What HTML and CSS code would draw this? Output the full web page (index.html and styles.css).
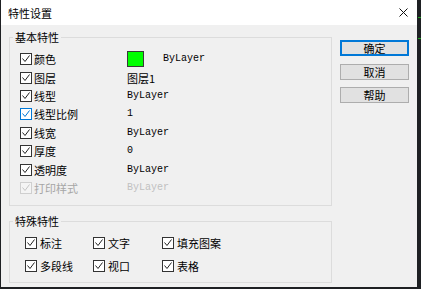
FILE: index.html
```html
<!DOCTYPE html>
<html lang="zh-CN">
<head>
<meta charset="utf-8">
<title>特性设置</title>
<link rel="stylesheet" href="styles.css">
</head>
<body>
<div class="window">
  <div class="titlebar">
    <span class="title">特性设置</span>
    <svg class="close" viewBox="0 0 9 9" width="9" height="9"><path d="M0.5 0.5 L8.5 8.5 M8.5 0.5 L0.5 8.5"/></svg>
  </div>
  <div class="content">
    <div class="groups">
      <div class="group basic">
        <div class="group-title">基本特性</div>
        <div class="rows">
          <div class="row">
            <svg class="cb" viewBox="0 0 12 12"><rect x="0.5" y="0.5" width="11" height="11"/><path d="M2.5 5.5 L5 8.5 L9.5 2.5"/></svg>
            <span class="label">颜色</span>
            <span class="value"><span class="swatch"></span><span class="mono after-swatch">ByLayer</span></span>
          </div>
          <div class="row">
            <svg class="cb" viewBox="0 0 12 12"><rect x="0.5" y="0.5" width="11" height="11"/><path d="M2.5 5.5 L5 8.5 L9.5 2.5"/></svg>
            <span class="label">图层</span>
            <span class="value">图层1</span>
          </div>
          <div class="row">
            <svg class="cb" viewBox="0 0 12 12"><rect x="0.5" y="0.5" width="11" height="11"/><path d="M2.5 5.5 L5 8.5 L9.5 2.5"/></svg>
            <span class="label">线型</span>
            <span class="value mono">ByLayer</span>
          </div>
          <div class="row">
            <svg class="cb hot" viewBox="0 0 12 12"><rect x="0.5" y="0.5" width="11" height="11"/><path d="M2.5 5.5 L5 8.5 L9.5 2.5"/></svg>
            <span class="label">线型比例</span>
            <span class="value mono">1</span>
          </div>
          <div class="row">
            <svg class="cb" viewBox="0 0 12 12"><rect x="0.5" y="0.5" width="11" height="11"/><path d="M2.5 5.5 L5 8.5 L9.5 2.5"/></svg>
            <span class="label">线宽</span>
            <span class="value mono">ByLayer</span>
          </div>
          <div class="row">
            <svg class="cb" viewBox="0 0 12 12"><rect x="0.5" y="0.5" width="11" height="11"/><path d="M2.5 5.5 L5 8.5 L9.5 2.5"/></svg>
            <span class="label">厚度</span>
            <span class="value mono">0</span>
          </div>
          <div class="row">
            <svg class="cb" viewBox="0 0 12 12"><rect x="0.5" y="0.5" width="11" height="11"/><path d="M2.5 5.5 L5 8.5 L9.5 2.5"/></svg>
            <span class="label">透明度</span>
            <span class="value mono">ByLayer</span>
          </div>
          <div class="row disabled">
            <svg class="cb off" viewBox="0 0 12 12"><rect x="0.5" y="0.5" width="11" height="11"/><path d="M2.5 5.5 L5 8.5 L9.5 2.5"/></svg>
            <span class="label">打印样式</span>
            <span class="value mono">ByLayer</span>
          </div>
        </div>
      </div>
      <div class="group special">
        <div class="group-title">特殊特性</div>
        <div class="grid">
          <div class="item"><svg class="cb" viewBox="0 0 12 12"><rect x="0.5" y="0.5" width="11" height="11"/><path d="M2.5 5.5 L5 8.5 L9.5 2.5"/></svg><span>标注</span></div>
          <div class="item"><svg class="cb" viewBox="0 0 12 12"><rect x="0.5" y="0.5" width="11" height="11"/><path d="M2.5 5.5 L5 8.5 L9.5 2.5"/></svg><span>文字</span></div>
          <div class="item"><svg class="cb" viewBox="0 0 12 12"><rect x="0.5" y="0.5" width="11" height="11"/><path d="M2.5 5.5 L5 8.5 L9.5 2.5"/></svg><span>填充图案</span></div>
          <div class="item"><svg class="cb" viewBox="0 0 12 12"><rect x="0.5" y="0.5" width="11" height="11"/><path d="M2.5 5.5 L5 8.5 L9.5 2.5"/></svg><span>多段线</span></div>
          <div class="item"><svg class="cb" viewBox="0 0 12 12"><rect x="0.5" y="0.5" width="11" height="11"/><path d="M2.5 5.5 L5 8.5 L9.5 2.5"/></svg><span>视口</span></div>
          <div class="item"><svg class="cb" viewBox="0 0 12 12"><rect x="0.5" y="0.5" width="11" height="11"/><path d="M2.5 5.5 L5 8.5 L9.5 2.5"/></svg><span>表格</span></div>
        </div>
      </div>
    </div>
    <div class="buttons">
      <button class="btn default">确定</button>
      <button class="btn">取消</button>
      <button class="btn">帮助</button>
    </div>
  </div>
</div>
</body>
</html>
```
FILE: styles.css
```css
html, body {
  margin: 0;
  padding: 0;
}
body {
  width: 421px;
  height: 289px;
  overflow: hidden;
  background:
    linear-gradient(#1fa21f, #1fa21f) 418px 17px / 3px 1px no-repeat,
    linear-gradient(#1fa21f, #1fa21f) 418px 38px / 3px 1px no-repeat,
    #1e2023;
  font-family: "Noto Sans CJK SC", "Noto Sans", sans-serif;
  font-size: 11px;
  color: #000;
}
.window {
  margin-left: 1px;
  width: 416px;
  height: 287px;
  background: #f0f0f0;
  display: flex;
  flex-direction: column;
}
.titlebar {
  height: 25px;
  background: #fff;
  display: flex;
  align-items: center;
  justify-content: space-between;
  padding: 0 9px 0 7px;
  box-sizing: border-box;
}
.title {
  font-size: 11px;
  line-height: 14px;
  margin-top: 1px;
}
.close {
  margin-top: 0;
}
.close path {
  stroke: #111;
  stroke-width: 1;
  fill: none;
}
.content {
  display: flex;
  padding-left: 8px;
}
.groups {
  width: 323px;
  display: flex;
  flex-direction: column;
}
.group {
  border: 1px solid #dcdcdc;
  box-sizing: border-box;
}
.basic {
  margin-top: 12px;
  height: 169px;
}
.special {
  margin-top: 15px;
  height: 62px;
}
.group-title {
  display: table;
  margin: -8px 0 0 3px;
  padding: 0 2px;
  background: #f0f0f0;
  line-height: 14px;
  height: 14px;
}
.rows {
  padding-top: 6px;
  padding-left: 10px;
}
.row {
  display: flex;
  align-items: center;
  height: 18.4px;
}
.cb {
  width: 12px;
  height: 12px;
  flex: none;
}
.cb rect {
  fill: #fff;
  stroke: #333;
  stroke-width: 1;
}
.cb path {
  fill: none;
  stroke: #222;
  stroke-width: 1;
}
.cb.hot rect {
  stroke: #0078d7;
}
.cb.hot path {
  stroke: #0078d7;
}
.cb.off rect {
  fill: #f4f4f4;
  stroke: #cfcfcf;
}
.cb.off path {
  stroke: #c4c4c4;
}
.label {
  margin-left: 2px;
  width: 93px;
  line-height: 14px;
}
.value {
  display: flex;
  align-items: center;
  line-height: 14px;
}
.mono {
  font-family: "Liberation Mono", "DejaVu Sans Mono", monospace;
  font-size: 10px;
}
.swatch {
  width: 17px;
  height: 16px;
  box-sizing: border-box;
  background: #00ff00;
  border: 1px solid #3a3a3a;
  margin-top: -1px;
}
.after-swatch {
  margin-left: 19px;
}
.disabled .label,
.disabled .value {
  color: #a6a6a6;
}
.disabled .value {
  color: #c0c0c0;
}
.grid {
  display: grid;
  grid-template-columns: 68px 69px auto;
  grid-auto-rows: 22.4px;
  margin-top: 4px;
  padding-left: 15px;
}
.item {
  display: flex;
  align-items: center;
  line-height: 14px;
}
.item span {
  margin-left: 3px;
}
.buttons {
  margin-left: 8px;
  padding-top: 15px;
  display: flex;
  flex-direction: column;
}
.btn {
  width: 69px;
  height: 16px;
  box-sizing: border-box;
  padding: 0;
  margin: 0 0 7.5px 0;
  background: #e1e1e1;
  border: 1px solid #adadad;
  font-family: "Noto Sans CJK SC", "Noto Sans", sans-serif;
  font-size: 11px;
  line-height: 12px;
  color: #000;
}
.btn.default {
  border: 2px solid #0078d7;
}
```
